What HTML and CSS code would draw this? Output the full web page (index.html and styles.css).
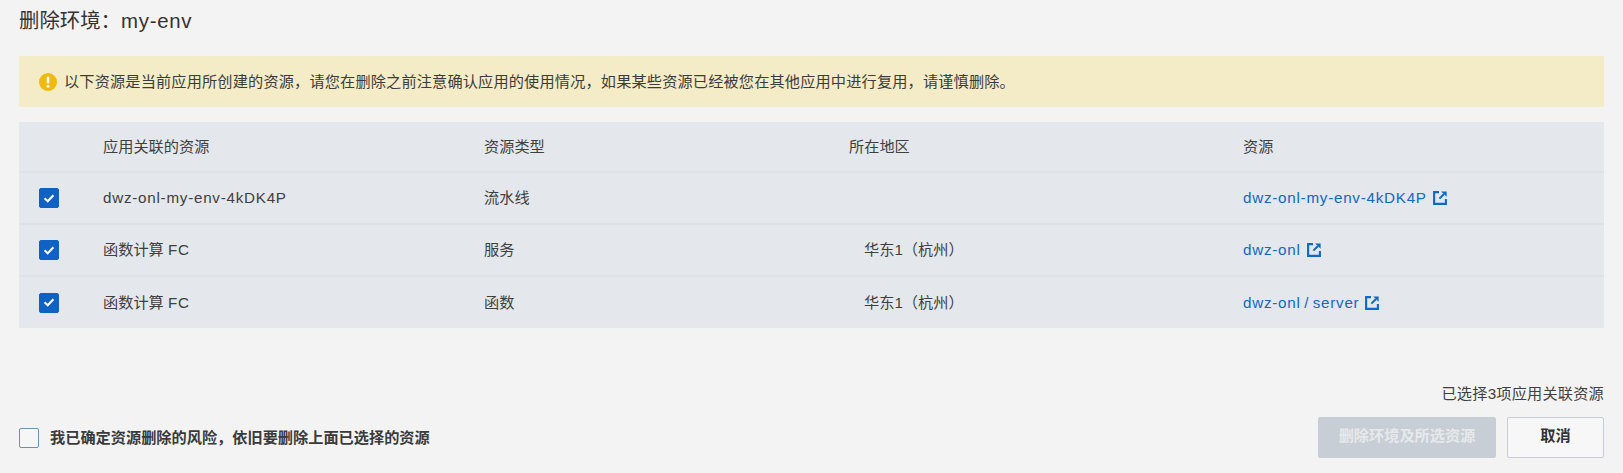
FILE: index.html
```html
<!DOCTYPE html>
<html lang="zh-CN">
<head>
<meta charset="utf-8">
<title>删除环境</title>
<link rel="stylesheet" href="styles.css">
</head>
<body>
<svg class="defs" width="0" height="0" aria-hidden="true">
  <symbol id="ext" viewBox="0 0 14 14">
    <path d="M6 1.1H1.1v11.8h11.8V8" fill="none" stroke="currentColor" stroke-width="2.1"/>
    <path d="M8.2 .4H13.6V5.8z" fill="currentColor"/>
    <path d="M11 3L6.4 7.6" fill="none" stroke="currentColor" stroke-width="2"/>
  </symbol>
  <symbol id="tick" viewBox="0 0 20 20">
    <path d="M5.6 10.2l3.1 3 5.7-6" fill="none" stroke="#fff" stroke-width="2.1"/>
  </symbol>
</svg>
<main class="page">
  <h1 class="title">删除环境&#xFF1A;<span class="latin">my-env</span></h1>
  <div class="alert">
    <svg class="alert-icon" viewBox="0 0 18 18" aria-hidden="true">
      <circle cx="9" cy="9" r="9" fill="#f0b90f"/>
      <rect x="7.7" y="3.4" width="2.6" height="7.2" rx="1.3" fill="#fff"/>
      <circle cx="9" cy="13.2" r="1.5" fill="#fff"/>
    </svg>
    <span class="alert-text">以下资源是当前应用所创建的资源&#xFF0C;请您在删除之前注意确认应用的使用情况&#xFF0C;如果某些资源已经被您在其他应用中进行复用&#xFF0C;请谨慎删除&#x3002;</span>
  </div>
  <table class="res">
    <colgroup>
      <col class="c0"><col class="c1"><col class="c2"><col class="c3"><col>
    </colgroup>
    <thead>
      <tr><th></th><th>应用关联的资源</th><th>资源类型</th><th>所在地区</th><th>资源</th></tr>
    </thead>
    <tbody>
      <tr>
        <td><span class="box on"><svg><use href="#tick"/></svg></span></td>
        <td class="latin">dwz-onl-my-env-4kDK4P</td><td>流水线</td><td class="region"></td>
        <td><a class="link" href="#"><span class="latin">dwz-onl-my-env-4kDK4P</span><svg class="ext"><use href="#ext"/></svg></a></td>
      </tr>
      <tr>
        <td><span class="box on"><svg><use href="#tick"/></svg></span></td>
        <td>函数计算 <span class="latin">FC</span></td><td>服务</td><td class="region">华东1&#xFF08;杭州&#xFF09;</td>
        <td><a class="link" href="#"><span class="latin">dwz-onl</span><svg class="ext"><use href="#ext"/></svg></a></td>
      </tr>
      <tr>
        <td><span class="box on"><svg><use href="#tick"/></svg></span></td>
        <td>函数计算 <span class="latin">FC</span></td><td>函数</td><td class="region">华东1&#xFF08;杭州&#xFF09;</td>
        <td><a class="link" href="#"><span class="latin">dwz-onl / server</span><svg class="ext"><use href="#ext"/></svg></a></td>
      </tr>
    </tbody>
  </table>
  <div class="count">已选择3项应用关联资源</div>
  <div class="footer">
    <label class="confirm"><span class="box"></span><span>我已确定资源删除的风险&#xFF0C;依旧要删除上面已选择的资源</span></label>
    <div class="actions">
      <button class="btn primary" type="button">删除环境及所选资源</button>
      <button class="btn" type="button">取消</button>
    </div>
  </div>
</main>
</body>
</html>
```
FILE: styles.css
```css
* { box-sizing: border-box; }
html, body { margin: 0; height: 100%; }
body {
  background: #f3f3f3;
  color: #3f3f3f;
  font-family: "Liberation Sans", "Noto Sans CJK SC", sans-serif;
  font-size: 15.2px;
  line-height: 20px;
  overflow: hidden;
}
.defs { display: block; height: 0; }
.latin { letter-spacing: .75px; word-spacing: -1.4px; }
.page { padding: 0 19px; }
.title {
  margin: 0;
  height: 56px;
  padding-top: 7px;
  font-size: 20.4px;
  line-height: 28px;
  font-weight: 400;
  color: #333;
}
.alert {
  display: flex;
  align-items: center;
  gap: 7px;
  height: 51px;
  padding: 0 20px;
  background: #f4ebc7;
  border-radius: 2px;
  color: #3c3c3c;
}
.alert-text { letter-spacing: .15px; }
.alert-icon { width: 18px; height: 18px; flex: none; }
.res {
  width: 100%;
  margin-top: 15px;
  border-collapse: collapse;
  table-layout: fixed;
  background: #e4e7eb;
}
.c0 { width: 84px; }
.c1 { width: 381px; }
.c2 { width: 365px; }
.c3 { width: 394px; }
th, td {
  height: 52px;
  padding: 0;
  text-align: left;
  font-weight: 400;
  border-top: 2px solid #dfe2e6;
}
th { height: 50px; border-top: 0; }
td:first-child { padding-left: 20px; }
.region { padding-left: 15px; }
.box {
  display: block;
  flex: none;
  width: 20px;
  height: 20px;
  border: 1.5px solid #6f8fb5;
  border-radius: 2px;
  background: #f5f6f7;
}
.box.on { background: #0f62c3; border-color: #0f62c3; }
.box svg { display: block; width: 20px; height: 20px; margin: -1.5px; }
.link {
  display: inline-flex;
  align-items: center;
  gap: 6px;
  color: #1068c9;
  text-decoration: none;
}
.ext { width: 14px; height: 14px; flex: none; }
.count {
  margin-top: 56px;
  text-align: right;
  letter-spacing: .2px;
}
.footer {
  display: flex;
  align-items: center;
  justify-content: space-between;
  margin-top: 13px;
}
.confirm {
  display: flex;
  align-items: center;
  gap: 11px;
  font-weight: 700;
  color: #3a3a3a;
}
.actions { display: flex; gap: 11px; }
.btn {
  height: 41px;
  width: 97px;
  padding: 0 0 3px;
  border: 1px solid #c4ccd6;
  border-radius: 2px;
  background: #f7f7f7;
  color: #333;
  font: 700 15.2px/20px "Liberation Sans", "Noto Sans CJK SC", sans-serif;
}
.primary {
  width: 178px;
  background: #c8ced5;
  border-color: #c8ced5;
  color: #e6e9ec;
}
```
